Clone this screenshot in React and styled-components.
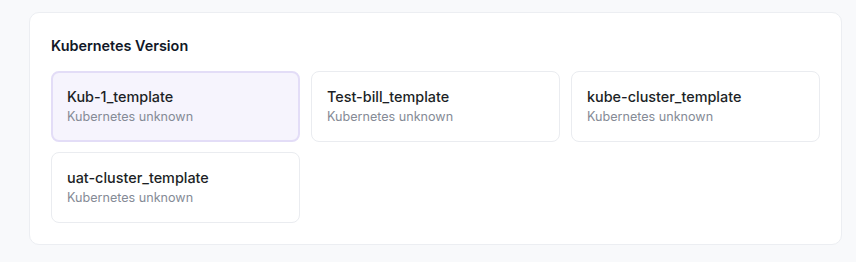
import styled, { createGlobalStyle } from "styled-components";

const GlobalStyle = createGlobalStyle`
  body {
    margin: 0;
    background: #f8f9fb;
    font-family: Inter, "Noto Sans", sans-serif;
    -webkit-font-smoothing: antialiased;
  }
`;

const Page = styled.div`
  padding: 12px 14px 16px 29px;
`;

const Panel = styled.section`
  background: #ffffff;
  border: 1px solid #eceef2;
  border-radius: 10px;
  padding: 23px 21px 21px 21px;
`;

const Title = styled.h3`
  margin: 0 0 15px 0;
  font-size: 14.4px;
  font-weight: 600;
  line-height: 20px;
  color: #111827;
`;

const Grid = styled.div`
  display: grid;
  grid-template-columns: repeat(3, 1fr);
  gap: 10px 11px;
`;

const Option = styled.button`
  display: flex;
  flex-direction: column;
  align-items: flex-start;
  justify-content: center;
  height: 71px;
  box-sizing: border-box;
  border-radius: 8px;
  border: ${(p) => (p.$selected ? "2px solid #e3ddf7" : "1px solid #eaecf0")};
  padding: 0 ${(p) => (p.$selected ? "14px" : "15px")};
  background: ${(p) => (p.$selected ? "#f6f4fd" : "#ffffff")};
  font-family: inherit;
  text-align: left;
  cursor: pointer;
`;

const Name = styled.span`
  font-size: 14.4px;
  font-weight: 500;
  line-height: 20px;
  color: #1c1f26;
`;

const Sub = styled.span`
  font-size: 12.6px;
  line-height: 20px;
  color: #858b96;
`;

const templates = [
  { name: "Kub-1_template", selected: true },
  { name: "Test-bill_template" },
  { name: "kube-cluster_template" },
  { name: "uat-cluster_template" },
];

export default function App() {
  return (
    <>
      <GlobalStyle />
      <Page>
        <Panel>
          <Title>Kubernetes Version</Title>
          <Grid>
            {templates.map((t) => (
              <Option key={t.name} $selected={t.selected}>
                <Name>{t.name}</Name>
                <Sub>Kubernetes unknown</Sub>
              </Option>
            ))}
          </Grid>
        </Panel>
      </Page>
    </>
  );
}
